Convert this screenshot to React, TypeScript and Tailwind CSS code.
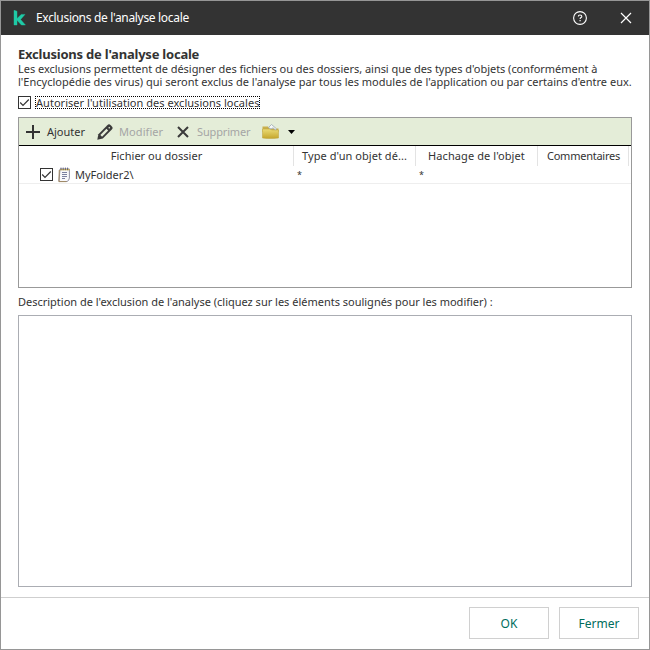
import React from 'react';

function Check() {
  return (
    <svg width="13" height="13" viewBox="0 0 13 13" className="block shrink-0">
      <rect x="0.5" y="0.5" width="12" height="12" fill="#fff" stroke="#333" />
      <path d="M2.2 6.5 L5 9.3 L10.8 3.5" fill="none" stroke="#333" strokeWidth="1.2" />
    </svg>
  );
}

function Logo() {
  return (
    <svg width="13" height="16" viewBox="0 0 13 16" className="block shrink-0">
      <path d="M1 0.3 L4 1.2 V8.6 L8.2 4.4 H12 L7.6 9.4 L12.4 15 H8.4 L4 10.2 V15 H1 Z" fill="#1fcaa6" stroke="#1fcaa6" strokeWidth="0.4" />
    </svg>
  );
}

function Pencil() {
  return (
    <svg width="16" height="16" viewBox="0 0 16 16" className="block shrink-0">
      <path d="M0.3 15.7 L1.4 10.2 L10.3 1.2 Q12 -0.5 13.7 1.2 L14.9 2.4 Q16.4 4 14.8 5.6 L5.8 14.6 Z" fill="#3a3a3a" />
      <path d="M4.2 11.8 L10.3 5.7" stroke="#e4edd8" strokeWidth="2.4" />
      <path d="M11.8 3.3 L12.7 4.2" stroke="#e4edd8" strokeWidth="1.4" />
    </svg>
  );
}

function Folder() {
  return (
    <svg width="17" height="15" viewBox="0 0 17 15" className="block shrink-0">
      <defs>
        <linearGradient id="folderFront" x1="0" y1="0" x2="0" y2="1">
          <stop offset="0" stopColor="#eadb75" />
          <stop offset="1" stopColor="#c5a62c" />
        </linearGradient>
      </defs>
      <path d="M0.5 2.5 H6 L7.5 4.5 H16.5 V8 H0.5 Z" fill="#c9b04c" />
      <path d="M0.5 5 H8 L10 6 H16.5 V14 Q8 15 0.5 14 Z" fill="url(#folderFront)" stroke="#bda039" strokeWidth="0.5" />
      <path d="M6.5 3.5 L9.5 0.5 L14.5 4.8 L13.5 6 L11 3.8 L9 5 Z" fill="#f5f7f8" stroke="#9aa8b2" strokeWidth="0.8" />
    </svg>
  );
}

function Notepad() {
  return (
    <svg width="12" height="16" viewBox="0 0 12 16" className="block shrink-0">
      <path d="M2 2 H11.4 V11 Q11 14 9 14.5 H1 Z" fill="#f8f8fb" stroke="#77758b" strokeWidth="0.8" />
      <path d="M1.3 3 L0.9 14.6 H8.5" fill="none" stroke="#a28962" />
      <path d="M2 2.6 H11.4" stroke="#d9bd55" strokeWidth="1.4" />
      <path d="M3 0.6 V3.2 M5.2 0.6 V3.2 M7.4 0.6 V3.2 M9.6 0.6 V3.2" stroke="#55567a" strokeWidth="0.9" />
      <path d="M4 5.5 H9 M4 7.5 H9 M4 9.5 H9 M4 11.5 H7" stroke="#6d7294" strokeWidth="0.9" />
    </svg>
  );
}

export default function App() {
  return (
    <div className="flex h-[650px] w-[650px] flex-col overflow-hidden whitespace-nowrap border border-[#969696] bg-white font-['Noto_Sans',sans-serif] text-[11px] leading-[14px] text-[#333]">
      <header className="flex h-[34px] shrink-0 items-center bg-[#333] pl-3 pr-[17px] text-white">
        <Logo />
        <h1 className="ml-[10px] text-[12px] leading-4 tracking-[-0.32px]">Exclusions de l'analyse locale</h1>
        <svg width="14" height="14" viewBox="0 0 14 14" className="ml-auto block">
          <circle cx="7" cy="7" r="6.4" fill="none" stroke="#fff" strokeWidth="1.1" />
          <path d="M5.3 5.5 Q5.3 4 7 4 Q8.8 4 8.8 5.4 Q8.8 6.1 8 6.6 Q7.1 7.1 7.1 8" fill="none" stroke="#fff" strokeWidth="1.1" />
          <path d="M6.5 9.1 H7.7 V10.2 H6.5 Z" fill="#fff" />
        </svg>
        <svg width="12" height="12" viewBox="0 0 12 12" className="ml-[33px] block">
          <path d="M1 1 L11 11 M11 1 L1 11" stroke="#fff" strokeWidth="1.2" />
        </svg>
      </header>

      <main className="flex grow flex-col px-[17px]">
        <h2 className="mt-[11px] h-4 text-[13px] font-bold leading-4"><span className="tracking-[-0.22px]">Exclusions de l'analyse locale</span></h2>
        <p className="h-[27px] leading-[13px]">
          <span className="block w-max tracking-[-0.04px]">Les exclusions permettent de désigner des fichiers ou des dossiers, ainsi que des types d'objets (conformément à</span>
          <span className="block w-max tracking-[0.005px]">l'Encyclopédie des virus) qui seront exclus de l'analyse par tous les modules de l'application ou par certains d'entre eux.</span>
        </p>
        <label className="mt-[6px] flex h-[14px] items-center">
          <Check />
          <span className="ml-[4px] h-[13px] w-[225px] border border-dotted border-black leading-[12px] tracking-[0.03px]">Autoriser l'utilisation des exclusions locales</span>
        </label>

        <section className="mt-[8px] h-[171px] shrink-0 border border-[#999]">
          <div className="flex h-7 items-center border-b border-black bg-[#e4edd8] pl-[7px]">
            <svg width="14" height="14" viewBox="0 0 14 14" className="block"><path d="M7 0 V14 M0 7 H14" stroke="#333" strokeWidth="2" /></svg>
            <span className="ml-[7px] w-[50px]">Ajouter</span>
            <Pencil />
            <span className="ml-[6px] w-[58px] tracking-[0.08px] text-[#a5a5a5]">Modifier</span>
            <svg width="12" height="12" viewBox="0 0 12 12" className="block"><path d="M1 1 L11 11 M11 1 L1 11" stroke="#3a3a3a" strokeWidth="2" /></svg>
            <span className="ml-[8px] w-[65px] tracking-[-0.15px] text-[#a5a5a5]">Supprimer</span>
            <Folder />
            <svg width="7" height="4" viewBox="0 0 7 4" className="ml-[9px] block"><path d="M0 0 H7 L3.5 4 Z" fill="#000" /></svg>
          </div>
          <div className="flex h-5 text-center leading-5">
            <div className="w-[275px] border-r border-[#e3e3e3] pl-px"><span className="tracking-[0.03px]">Fichier ou dossier</span></div>
            <div className="w-[122px] border-r border-[#e3e3e3]"><span className="tracking-[0.05px]">Type d'un objet dé...</span></div>
            <div className="w-[122px] border-r border-[#e3e3e3]"><span className="tracking-[0.08px]">Hachage de l'objet</span></div>
            <div className="w-[91px] border-r border-[#e3e3e3] pl-px"><span className="tracking-[-0.25px]">Commentaires</span></div>
          </div>
          <div className="flex h-[18px] items-center border-b border-[#eee]">
            <div className="flex w-[278px] items-center pl-[21px]">
              <Check />
              <span className="ml-[5px]"><Notepad /></span>
              <span className="ml-[5px]">MyFolder2\</span>
            </div>
            <span className="w-[122px] text-[9px]">*</span>
            <span className="text-[9px]">*</span>
          </div>
        </section>

        <p className="mt-[7px] h-[14px]"><span className="tracking-[-0.008px]">Description de l'exclusion de l'analyse (cliquez sur les éléments soulignés pour les modifier) :</span></p>
        <section className="mt-[6px] h-[272px] shrink-0 border border-[#abadb3]" />
      </main>

      <footer className="flex h-[52px] shrink-0 justify-end gap-[10px] border-t border-[#cfcfcf] pr-[10px] pt-[9px] text-[12px] text-[#006d5c]">
        <button className="h-8 w-20 border border-[#d0d0d0] pt-px">OK</button>
        <button className="h-8 w-20 border border-[#d0d0d0] pt-px">Fermer</button>
      </footer>
    </div>
  );
}
